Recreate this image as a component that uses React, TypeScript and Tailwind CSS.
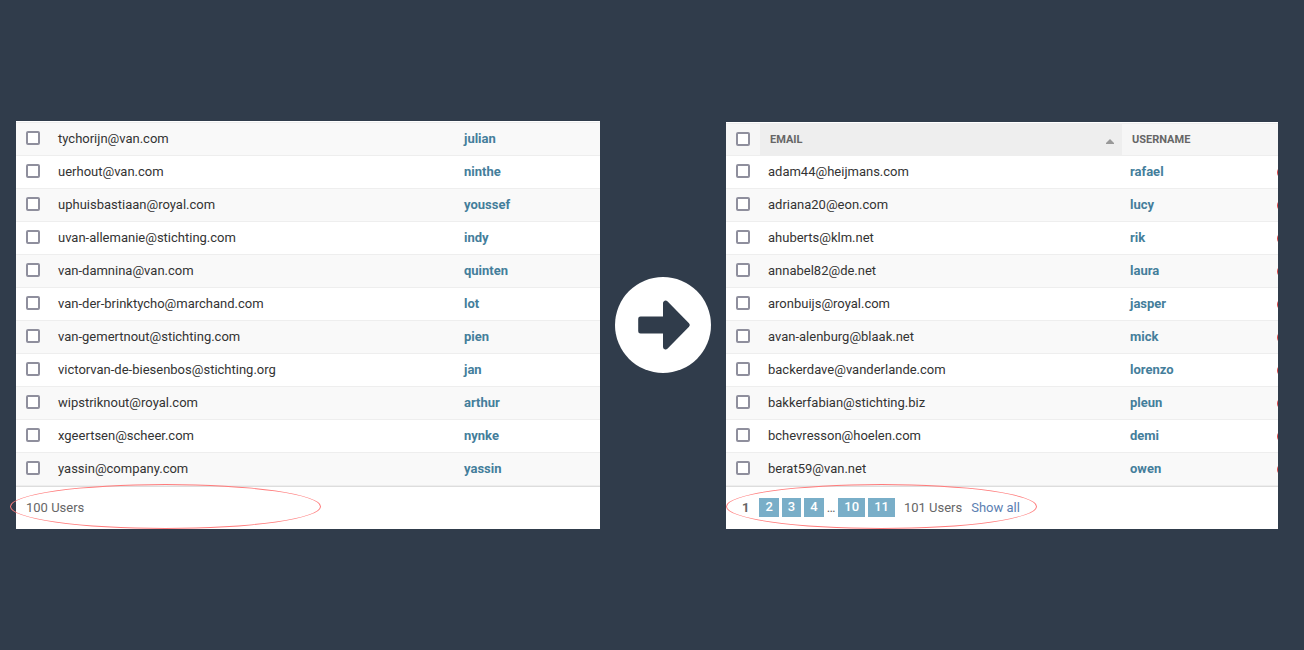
type User = { email: string; username: string };

const leftUsers: User[] = [
  { email: "tychorijn@van.com", username: "julian" },
  { email: "uerhout@van.com", username: "ninthe" },
  { email: "uphuisbastiaan@royal.com", username: "youssef" },
  { email: "uvan-allemanie@stichting.com", username: "indy" },
  { email: "van-damnina@van.com", username: "quinten" },
  { email: "van-der-brinktycho@marchand.com", username: "lot" },
  { email: "van-gemertnout@stichting.com", username: "pien" },
  { email: "victorvan-de-biesenbos@stichting.org", username: "jan" },
  { email: "wipstriknout@royal.com", username: "arthur" },
  { email: "xgeertsen@scheer.com", username: "nynke" },
  { email: "yassin@company.com", username: "yassin" },
];

const rightUsers: User[] = [
  { email: "adam44@heijmans.com", username: "rafael" },
  { email: "adriana20@eon.com", username: "lucy" },
  { email: "ahuberts@klm.net", username: "rik" },
  { email: "annabel82@de.net", username: "laura" },
  { email: "aronbuijs@royal.com", username: "jasper" },
  { email: "avan-alenburg@blaak.net", username: "mick" },
  { email: "backerdave@vanderlande.com", username: "lorenzo" },
  { email: "bakkerfabian@stichting.biz", username: "pleun" },
  { email: "bchevresson@hoelen.com", username: "demi" },
  { email: "berat59@van.net", username: "owen" },
];

function Checkbox({ label }: { label: string }) {
  return (
    <input
      type="checkbox"
      aria-label={label}
      className="block size-[14px] appearance-none rounded-[2px] border-2 border-[#8f8f9d] bg-white checked:bg-[#447e9b]"
    />
  );
}

function UserRow({ user, shaded, status }: { user: User; shaded: boolean; status?: boolean }) {
  const cell = "h-[33px] border-b border-[#eeeeee] p-0";
  return (
    <tr className={shaded ? "bg-[#f9f9f9]" : "bg-white"}>
      <td className={`${cell} pb-[2px] pl-[10px]`}>
        <Checkbox label={`Select ${user.email}`} />
      </td>
      <td className={`${cell} truncate pl-2`}>{user.email}</td>
      <th scope="row" className={`${cell} pl-2 text-left font-bold`}>
        <a href="#user" className="text-[#447e9b]">{user.username}</a>
      </th>
      {status && (
        <td className={cell}>
          <div className="h-[13px] w-px overflow-hidden">
            <div className="h-full w-[13px] rounded-full bg-[#dd4646]" />
          </div>
        </td>
      )}
    </tr>
  );
}

function Highlight({ className }: { className: string }) {
  return (
    <div
      className={`pointer-events-none absolute -top-[3px] h-[45px] w-[311px] rounded-[50%] border border-[#ff7c7c] ${className}`}
    />
  );
}

function PageLink({ page }: { page: number }) {
  return (
    <a href={`#page-${page}`} className="bg-[#79aec8] px-[6px] pb-px leading-[18px] font-medium text-white">
      {page}
    </a>
  );
}

const tableClass = "w-full table-fixed border-separate border-spacing-0 border-t border-[#eeeeee]";
const footerClass = "relative flex h-[43px] items-center border-t border-[#dddddd] text-[#666666]";

export default function App() {
  return (
    <main className="grid min-h-screen grid-cols-[minmax(0,584fr)_96px_minmax(0,552fr)] content-center items-center gap-x-[15px] bg-[#303c4b] pr-[26px] pl-4 font-['Roboto',sans-serif] text-[13px] leading-4 text-[#333333]">
      <section className="bg-white pt-px">
        <table className={tableClass}>
          <colgroup>
            <col className="w-[34px]" />
            <col className="w-[406px]" />
            <col />
          </colgroup>
          <tbody>
            {leftUsers.map((user, i) => (
              <UserRow key={user.email} user={user} shaded={i % 2 === 0} />
            ))}
          </tbody>
        </table>
        <footer className={`${footerClass} pl-[10px]`}>
          100 Users
          <Highlight className="-left-[6px]" />
        </footer>
      </section>

      <svg viewBox="0 0 96 96" className="size-24" aria-hidden="true">
        <circle cx="48" cy="48" r="48" fill="#fff" />
        <path
          d="M25.5 39.5H48V26a2.6 2.6 0 0 1 4.4-1.8L74 46.2a2.6 2.6 0 0 1 0 3.6L52.4 71.8A2.6 2.6 0 0 1 48 70V56.5H25.5a2.3 2.3 0 0 1-2.3-2.3V41.8a2.3 2.3 0 0 1 2.3-2.3Z"
          fill="#303c4b"
        />
      </svg>

      <section className="self-end bg-white pt-px">
        <table className={tableClass}>
          <colgroup>
            <col className="w-[34px]" />
            <col className="w-[362px]" />
            <col />
            <col className="w-px" />
          </colgroup>
          <thead className="text-[11px] text-[#666666] uppercase">
            <tr className="bg-[#f6f6f6]">
              <th className="h-8 border-b border-[#eeeeee] p-0 pb-[2px] pl-[10px]">
                <Checkbox label="Select all users" />
              </th>
              <th scope="col" className="h-8 border-b border-[#eeeeee] bg-[#eeeeee] p-0 pr-2 pl-[10px]">
                <div className="flex items-center justify-between">
                  <span>Email</span>
                  <svg viewBox="0 0 8 5" className="mt-1 h-[5px] w-2" aria-hidden="true">
                    <path d="M0 5V4L4 0l4 4v1Z" fill="#999" />
                  </svg>
                </div>
              </th>
              <th scope="col" className="h-8 border-b border-[#eeeeee] p-0 pl-[10px] text-left">
                Username
              </th>
              <td className="h-8 border-b border-[#eeeeee] p-0" />
            </tr>
          </thead>
          <tbody>
            {rightUsers.map((user, i) => (
              <UserRow key={user.email} user={user} shaded={i % 2 === 1} status />
            ))}
          </tbody>
        </table>
        <footer className={`${footerClass} pl-4`}>
          <nav aria-label="Pagination" className="flex items-center gap-[3px] pb-px">
            <span className="mr-[7px] font-bold">1</span>
            <PageLink page={2} />
            <PageLink page={3} />
            <PageLink page={4} />
            <span>…</span>
            <PageLink page={10} />
            <PageLink page={11} />
          </nav>
          <span className="ml-[9px]">101 Users</span>
          <a href="#all" className="ml-[9px] text-[#5b80b2]">Show all</a>
          <Highlight className="left-0" />
        </footer>
      </section>
    </main>
  );
}
